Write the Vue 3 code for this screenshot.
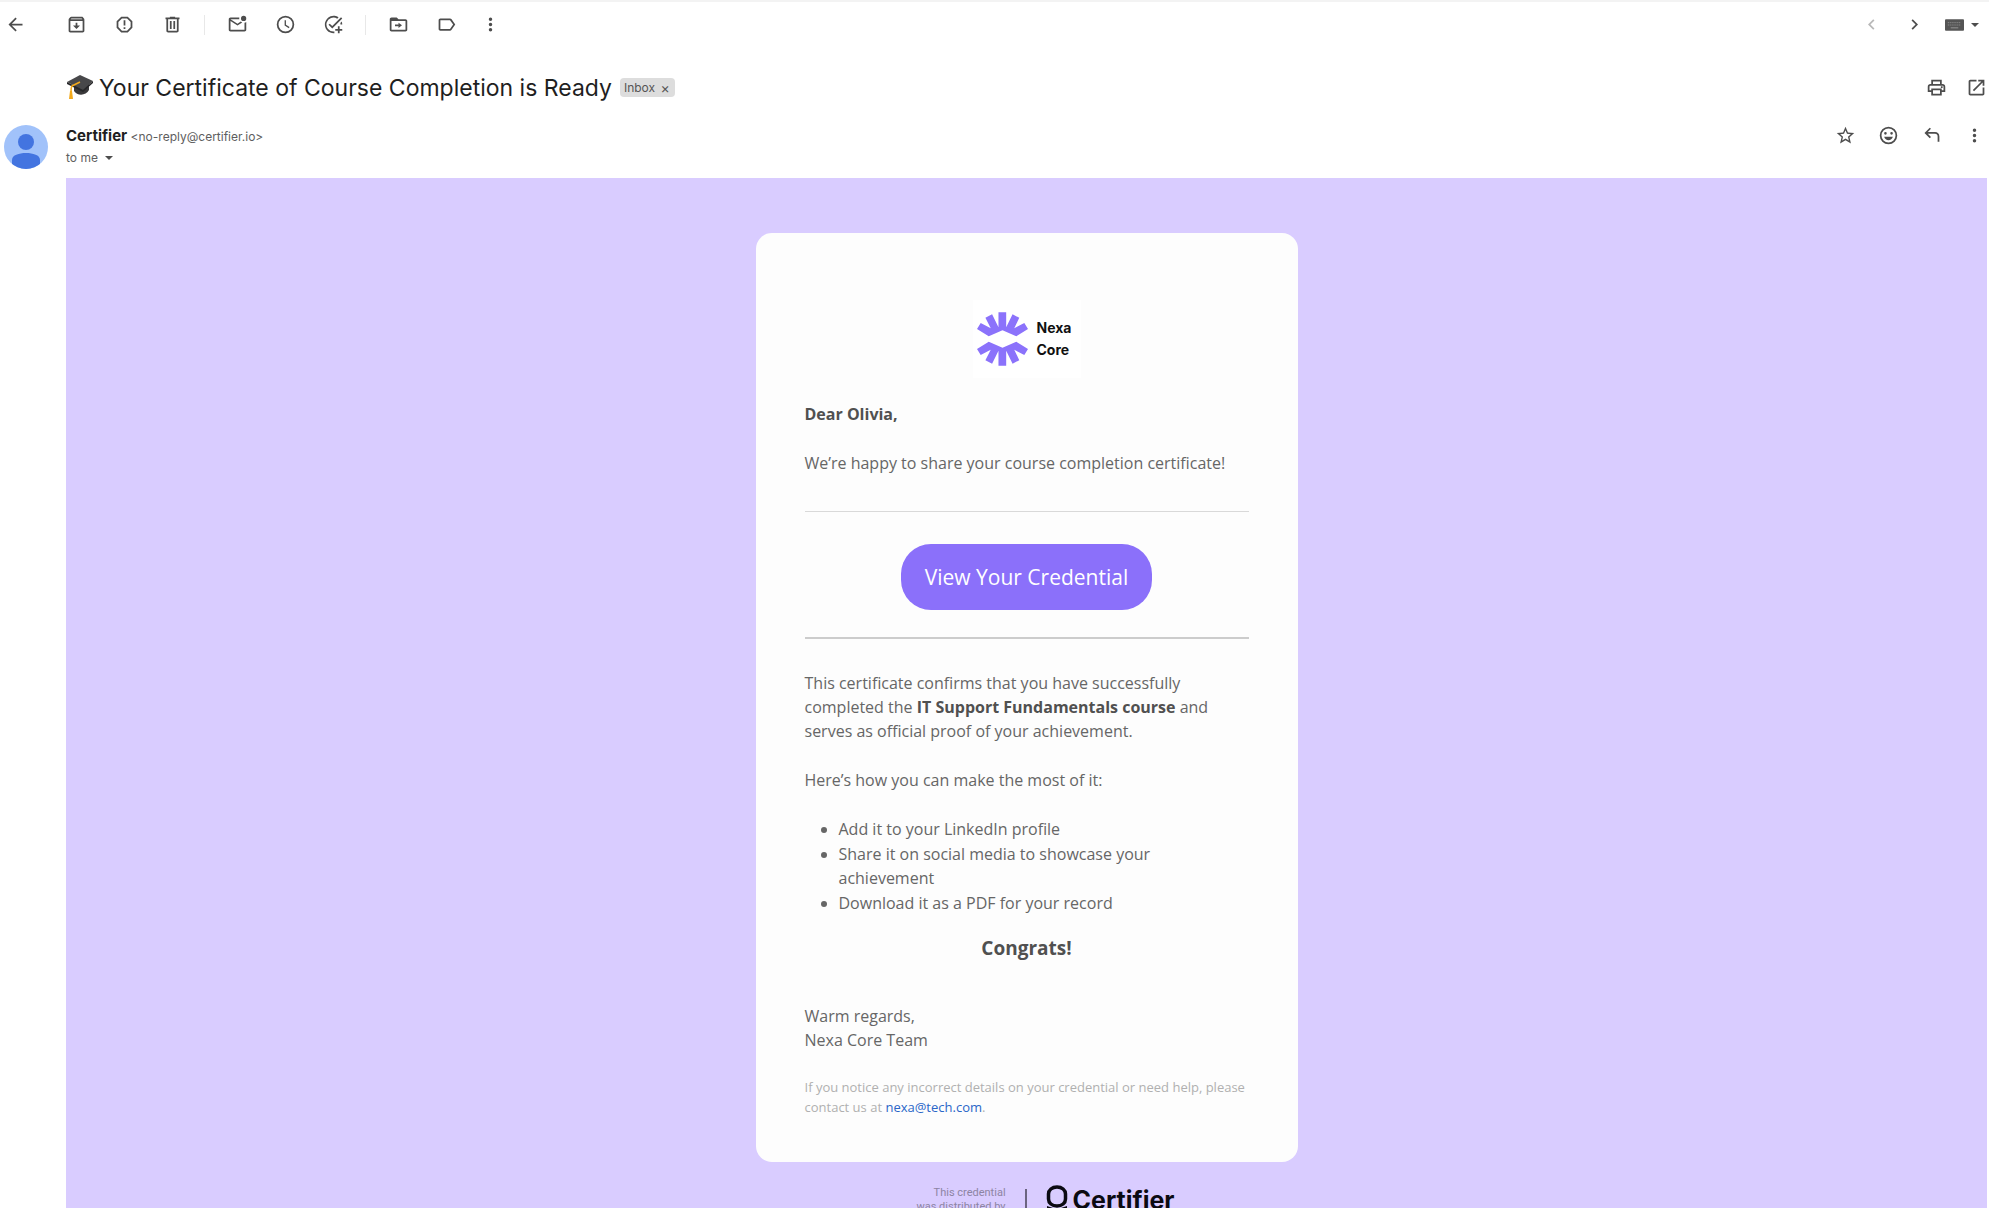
<template>
  <div class="mail">
    <header class="toolbar">
      <button class="tool tool-back" type="button" aria-label="Back">
        <svg viewBox="0 0 24 24"><path :d="icons.back" /></svg>
      </button>
      <template v-for="(group, i) in toolGroups" :key="i">
        <span v-if="i > 0" class="tool-divider"></span>
        <button v-for="tool in group" :key="tool.icon" class="tool" type="button" :aria-label="tool.label">
          <svg viewBox="0 0 24 24"><path :d="icons[tool.icon]" /></svg>
        </button>
      </template>
      <div class="pager">
        <button class="action" type="button" aria-label="Newer" disabled>
          <svg viewBox="0 0 24 24"><path :d="icons.left" /></svg>
        </button>
        <button class="action" type="button" aria-label="Older">
          <svg viewBox="0 0 24 24"><path :d="icons.right" /></svg>
        </button>
        <button class="input-tools" type="button" aria-label="Select input tool">
          <svg class="keyboard" viewBox="0 0 20 12">
            <rect width="20" height="12" rx="1" fill="#555" />
            <path d="M3 3.5h14M3 6h14" stroke="#999" stroke-dasharray="1 1" />
            <path d="M6 9h8" stroke="#999" />
          </svg>
          <svg class="caret" viewBox="0 0 8 4"><path d="M0 0h8L4 4z" /></svg>
        </button>
      </div>
    </header>

    <div class="subject-row">
      <svg class="cap" viewBox="0 0 28 25">
        <path d="M8 9v7c3 5 12 5 15-1V8z" fill="#39383a" />
        <path d="M1 7 14 0l13 6-10 9z" fill="#48484a" />
        <path d="M1 7l16 8 10-9v2l-10 9L1 9z" fill="#262628" />
        <path d="M14 7 6 11c-1 1-1 3-1 7" fill="none" stroke="#f2a91c" stroke-width="1.6" />
        <path d="M4 16h2l1 8H3z" fill="#f2a91c" />
      </svg>
      <h1 class="subject">Your Certificate of Course Completion is Ready</h1>
      <span class="chip">Inbox <button type="button" aria-label="Remove label Inbox">×</button></span>
      <div class="subject-actions">
        <button class="action" type="button" aria-label="Print all">
          <svg viewBox="0 0 24 24"><path :d="icons.print" /></svg>
        </button>
        <button class="action" type="button" aria-label="Open in new window">
          <svg viewBox="0 0 24 24"><path :d="icons.open" /></svg>
        </button>
      </div>
    </div>

    <div class="sender-row">
      <svg class="avatar" viewBox="0 0 44 44">
        <clipPath id="avatar-clip"><circle cx="22" cy="22" r="22" /></clipPath>
        <g clip-path="url(#avatar-clip)">
          <rect width="44" height="44" fill="#a1c2fa" />
          <circle cx="22" cy="17" r="8" fill="#4374e0" />
          <path d="M8 44V35c0-5 7-7 14-7s14 2 14 7v9z" fill="#4374e0" />
        </g>
      </svg>
      <div class="sender">
        <div class="from"><strong>Certifier</strong> <span>&lt;no-reply@certifier.io&gt;</span></div>
        <button class="recipients" type="button">
          to me <svg class="caret" viewBox="0 0 8 4"><path d="M0 0h8L4 4z" /></svg>
        </button>
      </div>
      <div class="message-actions">
        <button v-for="a in messageActions" :key="a.icon" class="action" type="button" :aria-label="a.label">
          <svg viewBox="0 0 24 24"><path :d="icons[a.icon]" /></svg>
        </button>
      </div>
    </div>

    <main class="email">
      <article class="card">
        <div class="brand">
          <svg viewBox="0 0 152 160">
            <path :d="rays" />
            <path :d="rays" transform="matrix(1 0 0 -1 0 160)" />
          </svg>
          <span>Nexa<br>Core</span>
        </div>
        <p><strong>Dear Olivia,</strong></p>
        <p>We’re happy to share your course completion certificate!</p>
        <hr class="rule">
        <a class="cta" href="#">View Your Credential</a>
        <hr class="rule rule-strong">
        <p>
          This certificate confirms that you have successfully completed the
          <strong>IT Support Fundamentals course</strong> and serves as official proof of your achievement.
        </p>
        <p>Here’s how you can make the most of it:</p>
        <ul>
          <li v-for="step in steps" :key="step">{{ step }}</li>
        </ul>
        <h2>Congrats!</h2>
        <p>Warm regards,<br>Nexa Core Team</p>
        <p class="notice">
          If you notice any incorrect details on your credential or need help, please contact us at
          <a href="mailto:nexa@tech.com">nexa@tech.com</a>.
        </p>
      </article>

      <footer class="distributor">
        <span class="distributor-text">This credential<br>was distributed by</span>
        <span class="distributor-divider"></span>
        <span class="certifier">
          <svg viewBox="0 0 22 32">
            <path d="M11 3c5 0 8.500 3 8.500 7v5c0 4-3.500 7-8.500 7s-8.500-3-8.500-7v-5c0-4 3.500-7 8.500-7z" fill="none" stroke="#0b0a12" stroke-width="3.500" />
            <path d="M1 22l6 2v7H1zM21 22l-6 2v7h6z" fill="#0b0a12" />
          </svg>
          Certifier
        </span>
      </footer>
    </main>
  </div>
</template>

<script setup>
const icons = {
  back: 'M20 11H7.8l5.6-5.6L12 4l-8 8 8 8 1.4-1.4L7.8 13H20z',
  archive: 'M20.5 5.2l-1.4-1.7C18.9 3.2 18.5 3 18 3H6c-.5 0-.9.2-1.2.6L3.5 5.2C3.2 5.6 3 6 3 6.5V19c0 1.1.9 2 2 2h14c1.1 0 2-.9 2-2V6.5c0-.5-.2-.9-.5-1.3zM6.2 5h11.6l.8 1H5.4zM5 19V8h14v11zm8-9h-2v3H8l4 4 4-4h-3z',
  spam: 'M11 15h2v2h-2zm0-8h2v6h-2zM8.3 3h7.4L21 8.3v7.4L15.7 21H8.3L3 15.7V8.3zM9.1 5L5 9.1v5.8L9.1 19h5.8l4.1-4.1V9.1L14.9 5z',
  trash: 'M15 4V3H9v1H4v2h1v13c0 1.1.9 2 2 2h10c1.1 0 2-.9 2-2V6h1V4zm2 15H7V6h10zM9 8h2v9H9zm4 0h2v9h-2z',
  unread: 'M22 9v9c0 1.1-.9 2-2 2H4c-1.1 0-2-.9-2-2V6c0-1.1.9-2 2-2h10.1c-.1.3-.1.7-.1 1s0 .7.1 1H4l8 5 3.7-2.3c.5.4 1 .8 1.7 1L12 13 4 8v10h16V9.9c.7-.1 1.4-.5 2-.9zM16 5a3 3 0 1 1 6 0 3 3 0 0 1-6 0z',
  clock: 'M12 2a10 10 0 1 0 0 20 10 10 0 0 0 0-20zm0 18a8 8 0 1 1 0-16 8 8 0 0 1 0 16zm.5-13H11v6l4.8 3.2.8-1.4-4.1-2.5z',
  task: 'M22 5.2L10.6 16.6l-4.3-4.2 1.4-1.4 2.9 2.8 10-10zM19.8 10.2c.1.6.2 1.2.2 1.8h2c0-1.2-.2-2.4-.6-3.4zM12 20a8 8 0 1 1 4.3-14.7l1.5-1.5A10 10 0 1 0 13 22v-2.1c-.3.1-.6.1-1 .1zm7-6h-2v3h-3v2h3v3h2v-3h3v-2h-3z',
  move: 'M20 6h-8l-2-2H4c-1.1 0-2 .9-2 2v12c0 1.1.9 2 2 2h16c1.1 0 2-.9 2-2V8c0-1.1-.9-2-2-2zm0 12H4V8h16zm-8-4.1V16l4-3.1L12 9.9V12H8v2z',
  label: 'M17.6 5.8C17.3 5.3 16.7 5 16 5H5c-1.1 0-2 .9-2 2v10c0 1.1.9 2 2 2h11c.7 0 1.3-.3 1.6-.8L22 12zM16 17H5V7h11l3.6 5z',
  more: 'M12 8a2 2 0 1 0 0-4 2 2 0 0 0 0 4zm0 2a2 2 0 1 0 0 4 2 2 0 0 0 0-4zm0 6a2 2 0 1 0 0 4 2 2 0 0 0 0-4z',
  left: 'M15.4 7.4L14 6l-6 6 6 6 1.4-1.4L10.8 12z',
  right: 'M8.6 16.6L10 18l6-6-6-6-1.4 1.4 4.6 4.6z',
  print: 'M19 8h-1V3H6v5H5c-1.7 0-3 1.3-3 3v6h4v4h12v-4h4v-6c0-1.7-1.3-3-3-3zM8 5h8v3H8zm8 14H8v-4h8zm2-4v-2H6v2H4v-4c0-.6.4-1 1-1h14c.6 0 1 .4 1 1v4zM17 10.5h2v2h-2z',
  open: 'M19 19H5V5h7V3H5c-1.1 0-2 .9-2 2v14c0 1.1.9 2 2 2h14c1.1 0 2-.9 2-2v-7h-2zM14 3v2h3.6l-9.8 9.8 1.4 1.4L19 6.4V10h2V3z',
  star: 'M22 9.2l-7.2-.6L12 2 9.2 8.6 2 9.2l5.5 4.7L5.8 21l6.2-3.7 6.2 3.7-1.6-7.1zM12 15.4l-3.8 2.3 1-4.3-3.3-2.9 4.4-.4L12 6.1l1.7 4 4.4.4-3.3 2.9 1 4.3z',
  smile: 'M12 2a10 10 0 1 0 0 20 10 10 0 0 0 0-20zm0 18a8 8 0 1 1 0-16 8 8 0 0 1 0 16zM7 9.5a1.5 1.5 0 1 0 3 0 1.5 1.5 0 0 0-3 0zm7 0a1.5 1.5 0 1 0 3 0 1.5 1.5 0 0 0-3 0zM7 13.5c.8 2.4 2.7 4 5 4s4.2-1.6 5-4z',
  reply: 'M7.8 10L11.4 13.6 10 15 4 9l6-6 1.4 1.4L7.8 8H16c3 0 5 2 5 5v6h-2v-6c0-2-1-3-3-3z',
}

const toolGroups = [
  [
    { icon: 'archive', label: 'Archive' },
    { icon: 'spam', label: 'Report spam' },
    { icon: 'trash', label: 'Delete' },
  ],
  [
    { icon: 'unread', label: 'Mark as unread' },
    { icon: 'clock', label: 'Snooze' },
    { icon: 'task', label: 'Add to Tasks' },
  ],
  [
    { icon: 'move', label: 'Move to' },
    { icon: 'label', label: 'Labels' },
    { icon: 'more', label: 'More' },
  ],
]

const messageActions = [
  { icon: 'star', label: 'Star' },
  { icon: 'smile', label: 'Add reaction' },
  { icon: 'reply', label: 'Reply' },
  { icon: 'more', label: 'More' },
]

const steps = [
  'Add it to your LinkedIn profile',
  'Share it on social media to showcase your achievement',
  'Download it as a PDF for your record',
]

// upper half of the brand mark, mirrored for the lower half
const rays = 'M0 50L11 32 41 48 25 17 45 6 64 45V0h23v45L106 6l20 11-15 31 30-16 11 18-35 22-41-18-41 18z'
</script>

<style>
body {
  margin: 0;
  background: #fff;
}
</style>

<style scoped>
.mail {
  display: flex;
  flex-direction: column;
  box-sizing: border-box;
  height: 100vh;
  padding: 0 2px 2px 0;
  border-top: 2px solid #f3f3f3;
  overflow: hidden;
  font-family: Inter, sans-serif;
  color: #1f1f1f;
}

button {
  padding: 0;
  border: 0;
  background: none;
  font: inherit;
  color: inherit;
  cursor: pointer;
}

svg {
  display: block;
  flex: none;
}

.toolbar {
  display: flex;
  align-items: center;
  height: 45px;
  flex: none;
}

.tool,
.action {
  display: flex;
  align-items: center;
  justify-content: center;
  width: 48px;
  height: 40px;
}

.tool svg,
.action svg {
  width: 21px;
  height: 21px;
  fill: #4d4d4d;
}

.tool-back {
  width: 30px;
  margin-right: 22px;
}

.tool:last-of-type {
  width: 40px;
}

.tool-divider {
  width: 1px;
  height: 20px;
  margin: 0 8px;
  background: #e8e8e8;
}

.action {
  width: 43px;
}

.action:disabled svg {
  fill: #b8b8b8;
}

.pager {
  display: flex;
  align-items: center;
  margin-left: auto;
  padding-right: 8px;
}

.input-tools {
  display: flex;
  align-items: center;
  gap: 7px;
  margin-left: 9px;
}

.keyboard {
  width: 19px;
  height: 12px;
}

.caret {
  width: 8px;
  height: 4px;
  fill: #4d4d4d;
}

.subject-row {
  display: flex;
  align-items: center;
  flex: none;
  height: 81px;
  padding-left: 66px;
}

.cap {
  width: 28px;
  height: 25px;
}

.subject {
  margin: 0 0 0 5px;
  font-size: 23px;
  font-weight: 400;
  line-height: 32px;
}

.chip {
  display: flex;
  align-items: center;
  gap: 4px;
  height: 19px;
  margin-left: 8px;
  padding: 0 4px;
  border-radius: 4px;
  background: #ddd;
  font-size: 12px;
  color: #555;
}

.chip button {
  width: 12px;
  font-size: 14px;
  line-height: 16px;
}

.subject-actions,
.message-actions {
  display: flex;
  margin-left: auto;
  margin-right: -9px;
}

.subject-actions .action {
  width: 40px;
}

.message-actions {
  margin-top: -13px;
}

.sender-row {
  display: flex;
  flex: none;
  height: 50px;
  padding-left: 4px;
}

.avatar {
  width: 44px;
  height: 44px;
  margin-top: -3px;
}

.sender {
  margin-left: 18px;
}

.from {
  font-size: 12px;
  line-height: 16px;
  color: #5e5e5e;
}

.from strong {
  font-size: 15px;
  color: #1f1f1f;
}

.recipients {
  display: flex;
  align-items: center;
  gap: 7px;
  margin-top: 5px;
  font-size: 12px;
  line-height: 16px;
  color: #5e5e5e;
}

.email {
  flex: 1;
  min-height: 0;
  margin-left: 66px;
  overflow: hidden;
  background: #d9ccff;
  font-family: "Open Sans", sans-serif;
}

.card {
  box-sizing: border-box;
  max-width: 542px;
  margin: 55px auto 0;
  padding: 67px 49px 45px;
  border-radius: 16px;
  background: #fdfdfd;
  font-size: 16px;
  line-height: 24px;
  color: #666;
}

.card strong,
.card h2 {
  font-weight: 700;
  color: #505050;
}

.brand {
  display: flex;
  align-items: center;
  gap: 9px;
  box-sizing: border-box;
  width: 108px;
  height: 78px;
  margin: 0 auto 24px;
  padding-left: 4px;
  background: #fff;
  font-family: Inter, sans-serif;
  font-size: 14px;
  font-weight: 700;
  line-height: 22px;
  color: #111;
}

.brand svg {
  width: 51px;
  height: 54px;
  fill: #8b72fb;
}

.card p {
  margin: 0 0 25px;
}

.rule {
  height: 1px;
  margin: 36px 0 32px;
  border: 0;
  background: #d9d9d9;
}

.rule-strong {
  height: 2px;
  margin: 27px 0 32px;
  background: #ccc;
}

.cta {
  display: block;
  width: fit-content;
  margin: 0 auto;
  padding: 0 24px;
  border-radius: 30px;
  background: #8b70fa;
  font-size: 21px;
  line-height: 66px;
  color: #fff;
  text-decoration: none;
}

ul {
  display: grid;
  gap: 1px;
  margin: 0 0 19px;
  padding-left: 34px;
}

h2 {
  margin: 0 0 42px;
  font-size: 19px;
  line-height: 28px;
  text-align: center;
}

.card .notice {
  margin: 0;
  font-size: 13px;
  line-height: 20px;
  color: #b0b0b0;
}

.notice a {
  color: #2a66c8;
  text-decoration: none;
}

.distributor {
  display: flex;
  justify-content: center;
  align-items: flex-start;
  gap: 19px;
  padding: 22px 0 0 38px;
}

.distributor-text {
  margin-top: 2px;
  font-family: Roboto, sans-serif;
  font-size: 11px;
  line-height: 14px;
  text-align: right;
  color: #8d84a3;
}

.distributor-divider {
  width: 2px;
  height: 32px;
  margin-top: 5px;
  background: #6b6480;
}

.certifier {
  display: flex;
  gap: 5px;
  font-family: Inter, sans-serif;
  font-size: 25px;
  font-weight: 700;
  line-height: 32px;
  color: #0b0a12;
}

.certifier svg {
  width: 22px;
  height: 32px;
}
</style>
